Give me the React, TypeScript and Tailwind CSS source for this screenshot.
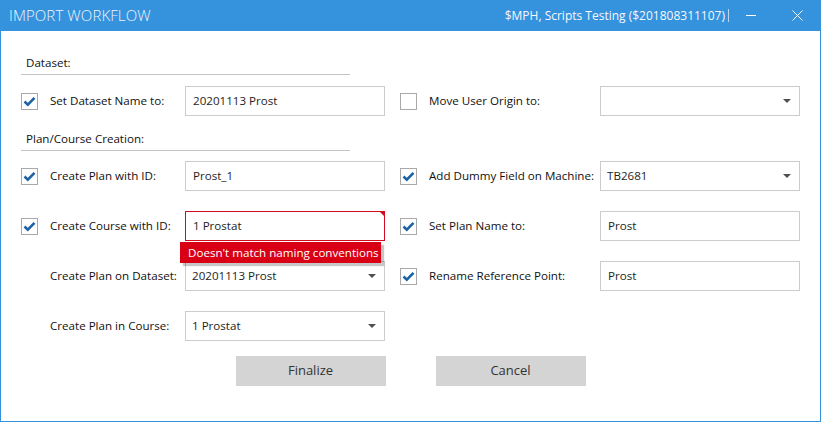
import React from "react";

const font = { fontFamily: '"Open Sans", "Liberation Sans", sans-serif' };

const Check = ({ checked }: { checked: boolean }) => (
  <div className="w-[17px] h-[17px] border border-[#a9a9a9] bg-white flex items-center justify-center">
    {checked && (
      <svg width="13" height="11" viewBox="0 0 13 11">
        <path d="M1.5 5.5 L4.8 8.6 L11.5 1.8" fill="none" stroke="#1b62a6" strokeWidth="2.6" />
      </svg>
    )}
  </div>
);

const Arrow = () => (
  <svg width="8" height="4" viewBox="0 0 8 4" className="mr-[8px]">
    <path d="M0 0 H8 L4 4 Z" fill="#505050" />
  </svg>
);

const TextBox = ({ value, error }: { value: string; error?: boolean }) => (
  <div
    className={`relative w-[200px] h-[30px] flex items-center pl-[7px] bg-white text-[11.6px] text-[#1e1e1e] border ${
      error ? "border-[#d40a1e]" : "border-[#cccccc]"
    }`}
  >
    <span className="-mt-px">{value}</span>
    {error && (
      <>
        <div className="absolute -top-px -right-px w-0 h-0 border-l-[6px] border-l-transparent border-t-[6px] border-t-[#d40a1e]" />
        <div className="absolute left-[-6px] top-[30px] w-[201px] h-[21px] bg-[#d90016] text-white text-[11.6px] whitespace-nowrap pl-[8px] flex items-center shadow-[3px_3px_1px_rgba(0,0,0,0.22)] z-10">
          Doesn&apos;t match naming conventions
        </div>
      </>
    )}
  </div>
);

const Combo = ({ value }: { value: string }) => (
  <div className="w-[200px] h-[30px] flex items-center justify-between pl-[6px] bg-white text-[11.6px] text-[#1e1e1e] border border-[#cccccc]">
    <span>{value}</span>
    <Arrow />
  </div>
);

type Side = {
  label: string;
  checked?: boolean;
  field: React.ReactNode;
};

const LeftCell = ({ label, checked, field }: Side) => (
  <div className="flex items-center w-[364px]">
    <div className="w-[29px]">{checked !== undefined && <Check checked={checked} />}</div>
    <div className="w-[135px] text-[11.6px] text-[#111] whitespace-nowrap">{label}</div>
    {field}
  </div>
);

const RightCell = ({ label, checked, field }: Side) => (
  <div className="flex items-center ml-[15px]">
    <div className="w-[29px]">{checked !== undefined && <Check checked={checked} />}</div>
    <div className="w-[171px] text-[11.6px] text-[#111] whitespace-nowrap">{label}</div>
    {field}
  </div>
);

const Section = ({ title, h }: { title: string; h: string }) => (
  <div className={`w-[329px] ${h} border-b border-[#c4c4c4] flex items-center pl-[5px] text-[11.6px] text-[#111]`}>
    {title}
  </div>
);

export default function App() {
  return (
    <div style={font} className="w-[821px] h-[422px] bg-white flex flex-col border-x border-b border-[#3592dd] overflow-hidden">
      {/* Title bar */}
      <div className="h-[31px] bg-[#3592dd] flex items-center text-white shrink-0 -mx-px">
        <div className="pl-[9px] text-[15px] font-light text-[#eef5fc] tracking-[0.1px]">IMPORT WORKFLOW</div>
        <div className="ml-auto text-[12px] text-[#f4f8fd] pr-[2px]">$MPH, Scripts Testing ($201808311107)</div>
        <div className="w-px h-[13px] bg-[#b9d8f3] ml-[1px]" />
        <div className="w-[10px] h-px bg-white ml-[17px]" />
        <svg width="11" height="11" viewBox="0 0 11 11" className="ml-[36px] mr-[18px]">
          <path d="M0.5 0.5 L10.5 10.5 M10.5 0.5 L0.5 10.5" stroke="white" strokeWidth="1" />
        </svg>
      </div>

      {/* Body */}
      <div className="flex flex-col pl-[20px] pt-[21px]">
        <Section title="Dataset:" h="h-[23px]" />

        <div className="flex mt-[11px]">
          <LeftCell label="Set Dataset Name to:" checked field={<TextBox value="20201113 Prost" />} />
          <RightCell label="Move User Origin to:" checked={false} field={<Combo value="" />} />
        </div>

        <div className="mt-[11px]">
          <Section title="Plan/Course Creation:" h="h-[24px]" />
        </div>

        <div className="flex flex-col gap-[20px] mt-[10px]">
          <div className="flex">
            <LeftCell label="Create Plan with ID:" checked field={<TextBox value="Prost_1" />} />
            <RightCell label="Add Dummy Field on Machine:" checked field={<Combo value="TB2681" />} />
          </div>
          <div className="flex">
            <LeftCell label="Create Course with ID:" checked field={<TextBox value="1 Prostat" error />} />
            <RightCell label="Set Plan Name to:" checked field={<TextBox value="Prost" />} />
          </div>
          <div className="flex">
            <LeftCell label="Create Plan on Dataset:" field={<Combo value="20201113 Prost" />} />
            <RightCell label="Rename Reference Point:" checked field={<TextBox value="Prost" />} />
          </div>
          <div className="flex">
            <LeftCell label="Create Plan in Course:" field={<Combo value="1 Prostat" />} />
          </div>
        </div>
      </div>

      <div className="flex justify-center gap-[50px] mt-[15px]">
        <button className="w-[150px] h-[30px] bg-[#d4d4d4] text-[13px] text-[#333]">Finalize</button>
        <button className="w-[150px] h-[30px] bg-[#d4d4d4] text-[13px] text-[#333]">Cancel</button>
      </div>
    </div>
  );
}
